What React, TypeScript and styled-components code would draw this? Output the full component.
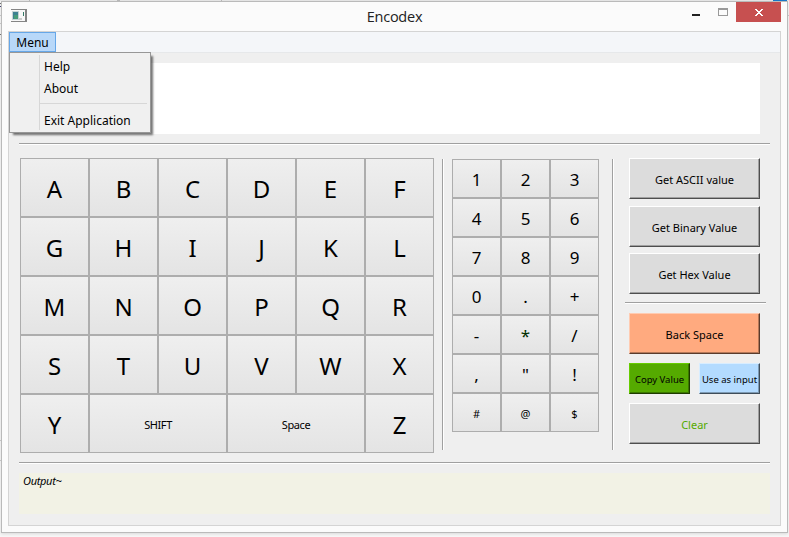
import React from 'react';
import styled, { createGlobalStyle, css } from 'styled-components';

const Global = createGlobalStyle`
  * { box-sizing: border-box; }
  body { margin: 0; background: #fafafa; font-family: "Noto Sans", sans-serif; color: #000; overflow: hidden; }
`;

const Desktop = styled.div`
  height: 537px;
  width: 789px;
  padding: 1px;
  background: linear-gradient(#e9e9e9 0 1px, #f7f7f7 1px);
  position: relative;
`;

const DesktopEdge = styled.svg`
  position: absolute;
  left: 0;
  top: 0;
`;

const Window = styled.div`
  position: relative;
  width: 787px;
  height: 532px;
  padding: 0 6px 6px;
  border: 1px solid #bababa;
  background: #fbfbfb;
  box-shadow: 0 1px 3px rgba(0, 0, 0, 0.12);
`;

const TitleBar = styled.div`
  display: grid;
  grid-template-columns: 1fr auto 1fr;
  height: 29px;
`;

const AppIcon = styled.svg`
  margin: 7px 0 0 3px;
`;

const Title = styled.div`
  font-family: "Open Sans", sans-serif;
  font-size: 14.5px;
  letter-spacing: -0.25px;
  line-height: 29px;
  color: #222;
`;

const WindowControls = styled.div`
  display: flex;
  justify-content: flex-end;
`;

const Client = styled.div`
  height: 495px;
  width: 773px;
  border: 1px solid #d4d4d4;
  background: #efefef;
`;

const MenuBar = styled.div`
  position: relative;
  height: 21px;
  background: #f4f6f9;
  border-bottom: 1px solid #e6e8ea;
`;

const MenuTab = styled.div`
  width: 47px;
  height: 20px;
  border: 1px solid #66a7e8;
  background: #b8d8f9;
  font: 12px/19px "Noto Sans", sans-serif;
  text-align: center;
`;

const Dropdown = styled.div`
  position: absolute;
  z-index: 1;
  left: 0;
  top: 20px;
  width: 142px;
  height: 81px;
  border: 1px solid #979797;
  background: #f0f0f0;
  padding: 2px 3px 2px 29px;
  box-shadow: 3px 3px 2px -1px rgba(0, 0, 0, 0.55);
`;

const MenuList = styled.div`
  border-left: 1px solid #d7d7d7;
  height: 75px;
`;

const MenuItem = styled.div<{ $spacing?: number }>`
  height: 22px;
  padding-left: 4px;
  font-size: 12px;
  line-height: 23px;
  letter-spacing: ${p => p.$spacing ?? 0}px;
  white-space: nowrap;
`;

const MenuSeparator = styled.div`
  height: 1px;
  margin: 4px 0 5px;
  background: #d7d7d7;
`;

const Content = styled.div`
  padding: 10px 10px 0;
`;

const InputField = styled.div`
  width: 741px;
  height: 71px;
  background: #fff;
`;

const Rule = styled.div<{ $top?: number }>`
  height: 2px;
  margin-top: ${p => p.$top ?? 0}px;
  background: linear-gradient(#a0a0a0 0 1px, #fff 1px);
`;

const VerticalRule = styled.div<{ $gap: number }>`
  width: 2px;
  height: 291px;
  margin: 1px 0 0 ${p => p.$gap}px;
  background: linear-gradient(90deg, #a0a0a0 0 1px, #fff 1px);
`;

const Pads = styled.div`
  display: flex;
  height: 304px;
  padding: 0 0 0 1px;
  margin-top: 13px;
`;

const LetterPad = styled.div`
  display: grid;
  grid-template-columns: repeat(6, 69px);
  grid-auto-rows: 59px;
  height: 295px;
`;

const NumberPad = styled.div`
  display: grid;
  grid-template-columns: repeat(3, 49px);
  grid-auto-rows: 39px;
  height: 273px;
  margin: 1px 0 0 8px;
`;

const Key = styled.button<{ $size: number; $span?: number; $spacing?: number; $color?: string }>`
  grid-column: span ${p => p.$span ?? 1};
  display: flex;
  align-items: center;
  justify-content: center;
  padding: 1px 0 0;
  border: 1px solid #adadad;
  border-radius: 0;
  background: linear-gradient(#efefef, #e4e4e4);
  font-family: "Noto Sans", sans-serif;
  font-size: ${p => p.$size}px;
  letter-spacing: ${p => p.$spacing ?? 0}px;
  color: ${p => p.$color ?? '#000'};
`;

const Actions = styled.div`
  width: 141px;
  margin-left: 11px;
  display: flex;
  flex-direction: column;
`;

const palettes = {
  grey: css`background: #dcdcdc; border-color: #fff #4e4e4e #4e4e4e #fff; box-shadow: inset -1px -1px #a0a0a0;`,
  orange: css`background: #ffaa7f; border-color: #ffcbb1 #593b2c #593b2c #ffcbb1; box-shadow: inset -1px -1px #b57859;`,
  green: css`background: #55aa00; border-color: #66cc00 #1e3b00 #1e3b00 #66cc00; box-shadow: inset -1px -1px #3c7800;`,
  blue: css`background: #b3dbff; border-color: #d8edff #3f4d59 #3f4d59 #d8edff; box-shadow: inset -1px -1px #7e9ab3;`,
};

const ActionButton = styled.button<{
  $tone: keyof typeof palettes; $top?: number; $small?: boolean; $spacing?: number; $color?: string;
}>`
  width: ${p => (p.$small ? 61 : 131)}px;
  height: ${p => (p.$small ? 31 : 41)}px;
  margin: ${p => p.$top ?? 0}px 0 0 ${p => (p.$small ? 0 : 4)}px;
  padding: 1px 0 0;
  border: 1px solid;
  font-family: "Noto Sans", sans-serif;
  font-size: ${p => (p.$small ? 9.5 : 11)}px;
  letter-spacing: ${p => p.$spacing ?? 0}px;
  color: ${p => p.$color ?? '#000'};
  white-space: nowrap;
  ${p => palettes[p.$tone]}
`;

const SplitRow = styled.div`
  display: flex;
  gap: 9px;
  margin: 9px 0 0 4px;
`;

const Output = styled.div`
  height: 41px;
  margin-top: 9px;
  padding: 0 4px;
  background: #f2f2e5;
  font-size: 11px;
  font-style: italic;
  line-height: 16px;
  letter-spacing: -0.3px;
`;

const letterRows = 'ABCDEFGHIJKLMNOPQRSTUVWX'.split('');
const numberKeys = '1234567890.+-*/,"!#@$'.split('');

export default function App() {
  return (
    <>
      <Global />
      <Desktop>
        <DesktopEdge width="789" height="537" shapeRendering="crispEdges">
          <path d="M29.5 0v1M117 .5h3M221.5 0v1" stroke="#bbb" />
          <path d="M0 15.5h1M0 23.5h1M0 44.5h1M0 440.5h1M0 460.5h1M788 15.5h1" stroke="#ccc" />
          <path d="M0 3.5h1M0 34.5h1" stroke="#777" />
          <path d="M0 6.5h1" stroke="#447" />
          <path d="M773 .5h14" stroke="#1979ca" />
        </DesktopEdge>
        <Window>
          <TitleBar>
            <AppIcon width="16" height="13" viewBox="0 0 16 13" shapeRendering="crispEdges">
              <rect width="16" height="13" fill="#858585" />
              <rect y="1" width="14" height="11" fill="#f8f8f8" />
              <rect x="1" y="2" width="7" height="9" fill="#c5d2d5" />
              <rect x="2" y="3" width="5" height="7" fill="#3c8090" />
              <rect x="3" y="6" width="4" height="4" fill="#459b78" />
              <rect x="8" y="9" width="3" height="2" fill="#ccc" />
              <rect x="12" y="3" width="1" height="4" fill="#347a66" />
            </AppIcon>
            <Title>Encodex</Title>
            <WindowControls>
              <svg width="90" height="20" viewBox="0 0 90 20" shapeRendering="crispEdges">
                <path d="M1 12h8v2H1z" fill="#222" />
                <path d="M27 6h10v8H27z" fill="#999" />
                <path d="M28 8h8v5h-8z" fill="#fbfbfb" />
                <path d="M45 0h45v20H45z" fill="#c75050" />
                <path d="M64 7h2v1h1v1h2v-1h1v-1h2v1h-1v1h-1v1h-1v1h1v1h1v1h1v1h-2v-1h-1v-1h-2v1h-1v1h-2v-1h1v-1h1v-1h1v-1h-1v-1h-1v-1h-1z" fill="#fff" />
              </svg>
            </WindowControls>
          </TitleBar>
          <Client>
            <MenuBar>
              <MenuTab>Menu</MenuTab>
              <Dropdown>
                <MenuList>
                  <MenuItem>Help</MenuItem>
                  <MenuItem>About</MenuItem>
                  <MenuSeparator />
                  <MenuItem>Exit Application</MenuItem>
                </MenuList>
              </Dropdown>
            </MenuBar>
            <Content>
              <InputField />
              <Rule $top={9} />
              <Pads>
                <LetterPad>
                  {letterRows.map(c => <Key key={c} $size={24}>{c}</Key>)}
                  <Key $size={24}>Y</Key>
                  <Key $size={11} $span={2} $spacing={-0.4}>SHIFT</Key>
                  <Key $size={11} $span={2} $spacing={-0.4}>Space</Key>
                  <Key $size={24}>Z</Key>
                </LetterPad>
                <VerticalRule $gap={8} />
                <NumberPad>
                  {numberKeys.map((c, i) => (
                    <Key key={c} $size={i > 17 ? 11 : 17} $color={c === '*' ? '#003000' : undefined}>{c}</Key>
                  ))}
                </NumberPad>
                <VerticalRule $gap={13} />
                <Actions>
                  <ActionButton $tone="grey">Get ASCII value</ActionButton>
                  <ActionButton $tone="grey" $top={7}>Get Binary Value</ActionButton>
                  <ActionButton $tone="grey" $top={6}>Get Hex Value</ActionButton>
                  <Rule $top={8} />
                  <ActionButton $tone="orange" $top={9}>Back Space</ActionButton>
                  <SplitRow>
                    <ActionButton $tone="green" $small>Copy Value</ActionButton>
                    <ActionButton $tone="blue" $small>Use as input</ActionButton>
                  </SplitRow>
                  <ActionButton $tone="grey" $top={9} $color="#55aa00">Clear</ActionButton>
                </Actions>
              </Pads>
              <Rule />
              <Output>Output~</Output>
            </Content>
          </Client>
        </Window>
      </Desktop>
    </>
  );
}
